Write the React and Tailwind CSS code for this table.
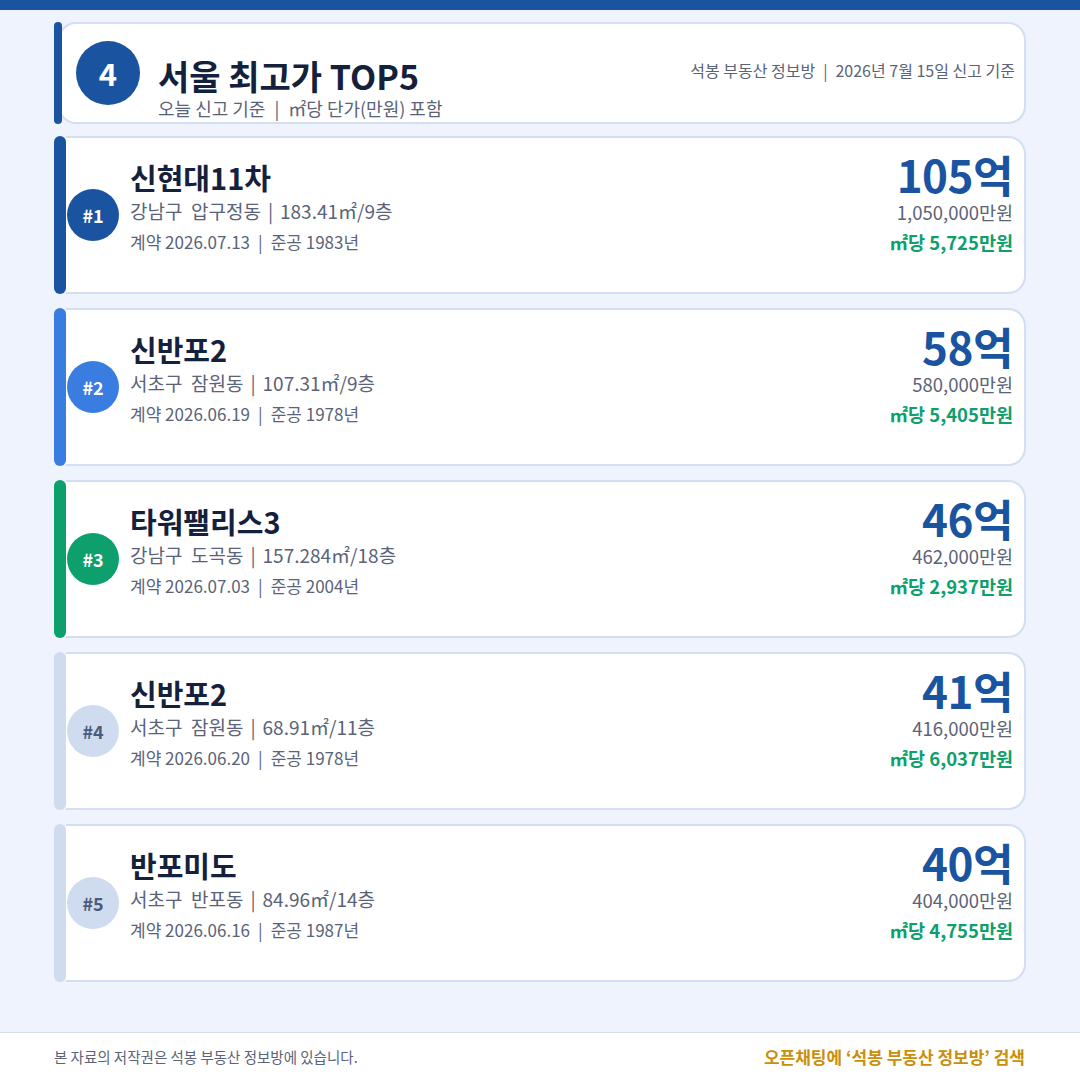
import React from "react";

const items = [
  { rank: 1, name: "신현대11차", loc: "강남구  압구정동", area: "183.41㎡/9층", date: "2026.07.13", built: "1983년", price: "105억", won: "1,050,000만원", per: "㎡당 5,725만원", bar: "bg-[#1a54a0]", circ: "bg-[#1a54a0] text-white" },
  { rank: 2, name: "신반포2", loc: "서초구  잠원동", area: "107.31㎡/9층", date: "2026.06.19", built: "1978년", price: "58억", won: "580,000만원", per: "㎡당 5,405만원", bar: "bg-[#3a7de0]", circ: "bg-[#3a7de0] text-white" },
  { rank: 3, name: "타워팰리스3", loc: "강남구  도곡동", area: "157.284㎡/18층", date: "2026.07.03", built: "2004년", price: "46억", won: "462,000만원", per: "㎡당 2,937만원", bar: "bg-[#0ea06c]", circ: "bg-[#0ea06c] text-white" },
  { rank: 4, name: "신반포2", loc: "서초구  잠원동", area: "68.91㎡/11층", date: "2026.06.20", built: "1978년", price: "41억", won: "416,000만원", per: "㎡당 6,037만원", bar: "bg-[#cfdcf0]", circ: "bg-[#cfdcf0] text-[#4b5b78]" },
  { rank: 5, name: "반포미도", loc: "서초구  반포동", area: "84.96㎡/14층", date: "2026.06.16", built: "1987년", price: "40억", won: "404,000만원", per: "㎡당 4,755만원", bar: "bg-[#cfdcf0]", circ: "bg-[#cfdcf0] text-[#4b5b78]" },
];

function Card({ it }) {
  return (
    <div className="flex h-[158px]">
      <div className={`w-[12px] rounded-full ${it.bar}`} />
      <div className="flex-1 flex bg-white border-2 border-l-0 border-[#d3def1] rounded-r-[18px]">
        <div className="self-center ml-[1px]">
          <div className={`w-[52px] h-[52px] rounded-full flex items-center justify-center text-[18px] font-bold ${it.circ}`}>
            #{it.rank}
          </div>
        </div>
        <div className="ml-[11px] pt-[21px] flex flex-col">
          <div className="text-[29px] leading-[36px] font-bold text-[#14213d]">{it.name}</div>
          <div className="mt-[3px] text-[19px] leading-[26px] text-[#5a6378] whitespace-pre">
            {it.loc}<span className="mx-[7px]">|</span>{it.area}
          </div>
          <div className="mt-[7px] text-[17px] leading-[22px] text-[#5a6378] whitespace-pre">
            계약 {it.date}<span className="mx-[8px]">|</span>준공 {it.built}
          </div>
        </div>
        <div className="ml-auto pt-[10px] pr-[11px] flex flex-col items-end">
          <div className="text-[44px] leading-[52px] font-bold text-[#1a54a0] tracking-[-0.5px]">{it.price}</div>
          <div className="text-[18.5px] leading-[24px] text-[#5a6378]">{it.won}</div>
          <div className="mt-[6px] text-[18.5px] leading-[24px] font-bold text-[#0ea06c]">{it.per}</div>
        </div>
      </div>
    </div>
  );
}

export default function App() {
  return (
    <div className="w-[1080px] h-[1080px] bg-[#eef3fd] flex flex-col font-['Noto_Sans_CJK_KR','Noto_Sans',sans-serif]">
      <div className="h-[10px] bg-[#1a54a0]" />
      <div className="px-[54px] pt-[12px] flex flex-col">
        <div className="flex h-[102px]">
          <div className="w-[8px] rounded-full bg-[#1a54a0] relative z-10" />
          <div className="-ml-[4px] flex-1 flex items-start bg-white border-2 border-[#d3def1] rounded-[18px] pl-[16px]">
            <div className="mt-[17px] w-[64px] h-[64px] rounded-full bg-[#1a54a0] flex items-center justify-center text-white text-[31px] font-bold">
              4
            </div>
            <div className="ml-[18px] mt-[32px] flex flex-col">
              <div className="text-[34px] leading-[40px] font-bold text-[#14213d]">서울 최고가 TOP5</div>
              <div className="mt-[1px] text-[18px] leading-[22px] text-[#5a6378] whitespace-pre">
                오늘 신고 기준<span className="mx-[9px]">|</span>㎡당 단가(만원) 포함
              </div>
            </div>
            <div className="ml-auto mt-[36px] mr-[9px] text-[16px] leading-[20px] text-[#5a6378] whitespace-pre">
              석봉 부동산 정보방<span className="mx-[8px]">|</span>2026년 7월 15일 신고 기준
            </div>
          </div>
        </div>
        <div className="mt-[12px] flex flex-col gap-[14px]">
          {items.map((it) => (
            <Card key={it.rank} it={it} />
          ))}
        </div>
      </div>
      <div className="mt-auto h-[48px] bg-white border-t border-[#d3def1] px-[54px] flex items-center justify-between">
        <div className="text-[14.5px] text-[#5a6378]">본 자료의 저작권은 석봉 부동산 정보방에 있습니다.</div>
        <div className="text-[17px] font-bold text-[#c98f0c] mr-[1px]">오픈채팅에 ‘석봉 부동산 정보방’ 검색</div>
      </div>
    </div>
  );
}
